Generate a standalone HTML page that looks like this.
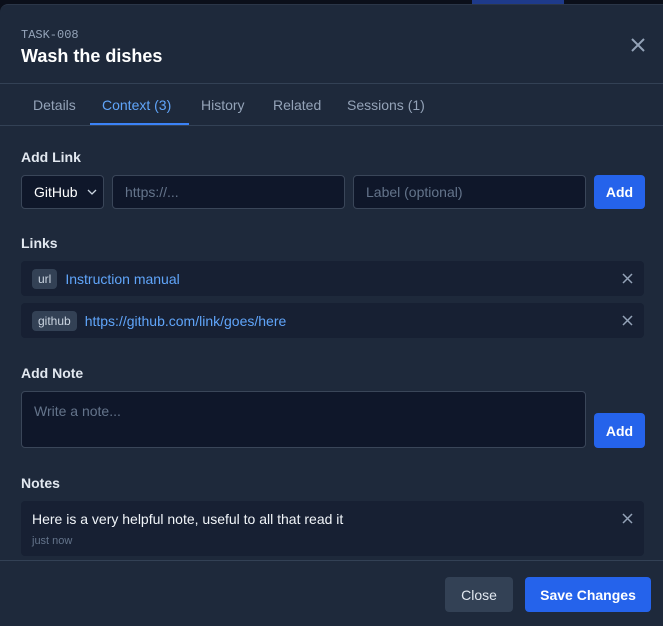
<!DOCTYPE html>
<html><head><style>
*{box-sizing:border-box;margin:0;padding:0}
html,body{width:663px;height:626px;overflow:hidden}
body{background:#0b0f1a;font-family:"Liberation Sans",sans-serif;position:relative}
.a{position:absolute}
.m{left:0;top:4px;width:663px;height:622px;background:#1e293b;border-radius:8px 0 0 0;border-top:1px solid #2b3648}
.hr{left:0;width:663px;height:1px;background:#334155}
.lbl{color:#e2e8f0;font-size:14px;font-weight:bold}
.inp{background:#0f172a;border:1px solid #3a4659;border-radius:4px;color:#64748b;font-size:14px;padding-left:12px;display:flex;align-items:center}
.btn{background:#2563eb;color:#fff;border-radius:4px;font-size:14px;display:flex;align-items:center;justify-content:center}
.row{left:21px;width:623px;background:#172033;border-radius:4px;display:flex;align-items:center;padding-left:11px}
.tag{background:#334155;color:#cbd5e1;font-size:12px;border-radius:4px;padding:0 6px;height:20px;line-height:20px;margin-right:8px}
.link{color:#60a5fa;font-size:14px}
.tab{top:97px;font-size:14px;color:#94a3b8}
</style></head><body>
<div class="a" style="left:472px;top:0;width:92px;height:4px;background:#1e3a8a"></div>
<div class="a m"></div>
<div class="a" style="left:21px;top:28px;font-family:'Liberation Mono',monospace;font-size:12px;color:#94a3b8">TASK-008</div>
<div class="a" style="left:21px;top:46px;font-size:18px;font-weight:bold;color:#fff">Wash the dishes</div>
<svg class="a" style="left:630px;top:37px" width="16" height="16"><path d="M2 2L14 14M14 2L2 14" stroke="#94a3b8" stroke-width="2"/></svg>
<div class="a hr" style="top:83px"></div>
<div class="a tab" style="left:33px">Details</div>
<div class="a tab" style="left:102px;color:#60a5fa">Context (3)</div>
<div class="a tab" style="left:201px">History</div>
<div class="a tab" style="left:273px">Related</div>
<div class="a tab" style="left:347px">Sessions (1)</div>
<div class="a" style="left:90px;top:123px;width:99px;height:3px;background:#3b82f6"></div>
<div class="a hr" style="top:125px"></div>
<div class="a lbl" style="left:21px;top:149px">Add Link</div>
<div class="a inp" style="left:21px;top:175px;width:83px;height:34px;color:#fff;background:#0f172a">GitHub<svg style="margin-left:9px" width="10" height="6"><path d="M1 1L5 5L9 1" stroke="#cbd5e1" stroke-width="1.3" fill="none"/></svg></div>
<div class="a inp" style="left:112px;top:175px;width:233px;height:34px">https://...</div>
<div class="a inp" style="left:353px;top:175px;width:233px;height:34px">Label (optional)</div>
<div class="a btn" style="left:594px;top:175px;width:51px;height:34px;font-weight:bold">Add</div>
<div class="a lbl" style="left:21px;top:235px">Links</div>
<div class="a row" style="top:261px;height:35px"><span class="tag">url</span><span class="link">Instruction manual</span></div>
<svg class="a" style="left:622px;top:273px" width="11" height="11"><path d="M1 1L10 10M10 1L1 10" stroke="#94a3b8" stroke-width="1.5"/></svg>
<div class="a row" style="top:303px;height:35px"><span class="tag">github</span><span class="link">https://github.com/link/goes/here</span></div>
<svg class="a" style="left:622px;top:315px" width="11" height="11"><path d="M1 1L10 10M10 1L1 10" stroke="#94a3b8" stroke-width="1.5"/></svg>
<div class="a lbl" style="left:21px;top:365px">Add Note</div>
<div class="a inp" style="left:21px;top:391px;width:565px;height:57px;align-items:flex-start;padding-top:11px">Write a note...</div>
<div class="a btn" style="left:594px;top:413px;width:51px;height:35px;font-weight:bold">Add</div>
<div class="a lbl" style="left:21px;top:475px">Notes</div>
<div class="a row" style="top:501px;height:55px"></div>
<div class="a" style="left:32px;top:511px;font-size:14px;color:#f1f5f9">Here is a very helpful note, useful to all that read it</div>
<div class="a" style="left:32px;top:535px;font-size:11px;color:#64748b">just now</div>
<svg class="a" style="left:622px;top:513px" width="11" height="11"><path d="M1 1L10 10M10 1L1 10" stroke="#94a3b8" stroke-width="1.5"/></svg>
<div class="a hr" style="top:560px"></div>
<div class="a btn" style="left:445px;top:577px;width:68px;height:35px;background:#334155;color:#e2e8f0">Close</div>
<div class="a btn" style="left:525px;top:577px;width:126px;height:35px;font-weight:bold">Save Changes</div>
</body></html>
